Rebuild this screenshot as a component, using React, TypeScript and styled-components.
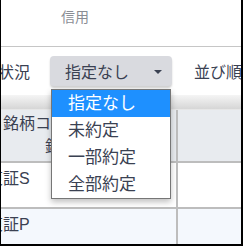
import React from 'react';
import styled, { createGlobalStyle } from 'styled-components';

const GlobalStyle = createGlobalStyle`
  html, body {
    margin: 0;
    padding: 0;
  }
  body {
    width: 243px;
    height: 246px;
    box-sizing: border-box;
    border-left: 1px solid #000;
    border-right: 2px solid #000;
    border-bottom: 2px solid #000;
    overflow: hidden;
    background: #fff;
    font-family: "Liberation Sans", "Noto Sans CJK JP", sans-serif;
    color: #3a4152;
  }
`;

const Page = styled.div`
  display: flex;
  flex-direction: column;
  width: 240px;
  overflow: hidden;
`;

const TabBar = styled.div`
  height: 47px;
  box-sizing: border-box;
  border-bottom: 1px solid #c6c6c6;
  padding: 6px 0 0 60px;
  font-size: 14px;
  color: #8a8d94;
`;

const Toolbar = styled.div`
  height: 48px;
  display: flex;
  align-items: center;
  white-space: nowrap;
  font-size: 16px;
  position: relative;
  z-index: 2;
`;

const Label = styled.span<{ $gap?: number }>`
  margin-left: ${(p) => p.$gap ?? 0}px;
`;

const SelectWrap = styled.div`
  position: relative;
  margin-left: 20px;
`;

const SelectButton = styled.div`
  width: 122px;
  height: 30px;
  box-sizing: border-box;
  display: flex;
  align-items: center;
  justify-content: space-between;
  padding: 0 10px 0 15px;
  border-radius: 4px;
  background: #d9dadf;
  box-shadow: 0 2px 2px rgba(0, 0, 0, 0.18);
  font-size: 16px;
  color: #3a4152;
`;

const Caret = styled.span`
  width: 0;
  height: 0;
  border-left: 4px solid transparent;
  border-right: 4px solid transparent;
  border-top: 4px solid #3a4152;
  margin-top: 2px;
`;

const Menu = styled.ul`
  position: absolute;
  top: 33px;
  left: 1px;
  width: 120px;
  margin: 0;
  padding: 0;
  list-style: none;
  box-sizing: border-box;
  background: #fff;
  border: 1px solid #767676;
  box-shadow: 0 3px 6px rgba(0, 0, 0, 0.25);
`;

const MenuItem = styled.li<{ $active?: boolean }>`
  height: 27px;
  line-height: 27px;
  padding-left: 16px;
  font-size: 17px;
  background: ${(p) => (p.$active ? '#1e90ff' : 'transparent')};
  color: ${(p) => (p.$active ? '#fff' : '#3a4152')};
`;

const ShadowBand = styled.div`
  height: 14px;
  background: linear-gradient(#f5f5f5, #d6d6d6);
  border-bottom: 1px solid #e6e6e6;
`;

const Row = styled.div<{ $bg: string; $height: number }>`
  display: grid;
  grid-template-columns: 177px 1fr;
  height: ${(p) => p.$height}px;
  background: ${(p) => p.$bg};
  border-bottom: 2px solid #bdbdbd;
`;

const Cell = styled.div<{ $pad?: number }>`
  border-right: 2px solid #bdbdbd;
  padding-top: ${(p) => p.$pad ?? 4}px;
  font-size: 16px;
  line-height: 23px;
  white-space: nowrap;
  overflow: hidden;
`;

const LastCell = styled.div`
  overflow: hidden;
`;

const Shift = styled.div<{ $x: number }>`
  margin-left: ${(p) => p.$x}px;
`;

const options = ['指定なし', '未約定', '一部約定', '全部約定'];

export default function App() {
  return (
    <>
      <GlobalStyle />
      <Page>
        <TabBar>信用</TabBar>
        <Toolbar>
          <Label $gap={-3}>状況</Label>
          <SelectWrap>
            <SelectButton>
              指定なし
              <Caret />
            </SelectButton>
            <Menu>
              {options.map((o, i) => (
                <MenuItem key={o} $active={i === 0}>
                  {o}
                </MenuItem>
              ))}
            </Menu>
          </SelectWrap>
          <Label $gap={22}>並び順</Label>
        </Toolbar>
        <ShadowBand />
        <Row $bg="#e8ebef" $height={51}>
          <Cell $pad={2}>
            <Shift $x={2}>銘柄コード</Shift>
            <Shift $x={44}>銘柄名</Shift>
          </Cell>
          <LastCell />
        </Row>
        <Row $bg="#fff" $height={44}>
          <Cell>
            <Shift $x={-14}>東証S</Shift>
          </Cell>
          <LastCell />
        </Row>
        <Row $bg="#f4f8fd" $height={40}>
          <Cell>
            <Shift $x={-14}>東証P</Shift>
          </Cell>
          <LastCell />
        </Row>
      </Page>
    </>
  );
}
